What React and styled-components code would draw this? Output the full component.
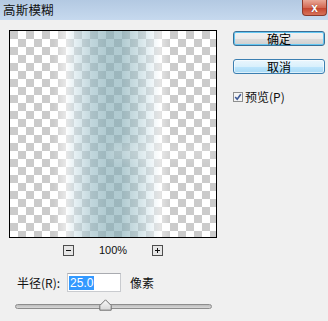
import React from "react";
import styled, { createGlobalStyle } from "styled-components";

const Global = createGlobalStyle`
  html, body { margin: 0; padding: 0; background: #f0f0f0; }
  body { font-family: "Noto Sans CJK SC", "Liberation Sans", sans-serif; }
`;

const Window = styled.div`
  width: 328px;
  height: 321px;
  background: #f0f0f0;
  display: flex;
  flex-direction: column;
  overflow: hidden;
`;

const TitleBar = styled.div`
  height: 20px;
  flex: none;
  display: flex;
  align-items: flex-start;
  justify-content: space-between;
  background: linear-gradient(#b3c9e2, #c6d9ee);
  padding-left: 3px;
`;

const Title = styled.div`
  font-size: 12.5px;
  line-height: 20px;
  color: #101010;
  letter-spacing: 0.2px;
`;

const CloseButton = styled.div`
  width: 25px;
  height: 16px;
  margin-right: 1px;
  box-sizing: border-box;
  border: 1px solid #8a3a2c;
  border-top: none;
  border-radius: 0 0 4px 4px;
  background: linear-gradient(#e9a897, #d46a55 50%, #c54630 55%, #d7735a);
  display: flex;
  align-items: center;
  justify-content: center;
  color: #fff;
  font-family: "Liberation Sans", sans-serif;
  font-weight: bold;
  font-size: 12px;
  line-height: 1;
  text-shadow: 0 0 1px #6a2418;
`;

const Body = styled.div`
  display: grid;
  grid-template-columns: 233px 1fr;
  padding-top: 10px;
`;

const LeftCol = styled.div`
  padding-left: 9px;
  display: flex;
  flex-direction: column;
`;

const Preview = styled.div`
  position: relative;
  width: 208px;
  height: 208px;
  box-sizing: border-box;
  border: 1px solid #000;
  background-color: #fff;
  background-image:
    linear-gradient(45deg, #cbcbcb 25%, transparent 25%, transparent 75%, #cbcbcb 75%),
    linear-gradient(45deg, #cbcbcb 25%, transparent 25%, transparent 75%, #cbcbcb 75%);
  background-size: 16px 16px;
  background-position: 8px 0, 0 8px;
  overflow: hidden;
`;

const Band = styled.div`
  position: absolute;
  inset: 0;
  background: linear-gradient(
    to right,
    rgba(255, 255, 255, 0) 21%,
    rgba(255, 255, 255, 0.55) 27%,
    rgba(205, 225, 232, 0.55) 32%,
    rgba(150, 186, 196, 0.6) 40%,
    rgba(128, 170, 180, 0.62) 47%,
    rgba(128, 170, 180, 0.62) 54%,
    rgba(160, 194, 202, 0.55) 61%,
    rgba(215, 232, 238, 0.55) 68%,
    rgba(255, 255, 255, 0.5) 73%,
    rgba(255, 255, 255, 0) 78%
  );
`;

const Ghost = styled.div`
  position: absolute;
  left: 100px;
  top: 112px;
  width: 104px;
  height: 18px;
  background: rgba(255, 255, 255, 0.18);
  filter: blur(5px);
`;

const ZoomRow = styled.div`
  margin-top: 7px;
  width: 208px;
  height: 10px;
  display: flex;
  align-items: center;
  justify-content: center;
  gap: 25px;
`;

const ZoomText = styled.span`
  font-family: "Liberation Sans", sans-serif;
  font-size: 11px;
  line-height: 10px;
  color: #111;
`;

const IconBox = styled.svg`
  display: block;
  width: 11px;
  height: 11px;
`;

const RadiusRow = styled.div`
  margin-top: 18px;
  padding-left: 8px;
  display: flex;
  align-items: center;
  height: 19px;
`;

const Label = styled.span`
  font-size: 12px;
  color: #111;
`;

const Input = styled.div`
  margin-left: 7px;
  width: 54px;
  height: 19px;
  box-sizing: border-box;
  border: 1px solid #c9cbcf;
  border-top-color: #a9abb0;
  background: #fff;
  display: flex;
  align-items: center;
  padding-left: 1px;
`;

const Selected = styled.span`
  background: #3399ff;
  color: #fff;
  font-family: "Liberation Sans", sans-serif;
  font-size: 12px;
  line-height: 14px;
  padding: 0 1px;
`;

const Unit = styled.span`
  margin-left: 9px;
  font-size: 12px;
  color: #111;
`;

const Track = styled.div`
  position: relative;
  margin-top: 12px;
  margin-left: 6px;
  width: 197px;
  height: 5px;
  box-sizing: border-box;
  border: 1px solid #8d8d8d;
  border-radius: 3px;
  background: linear-gradient(#bdbdbd, #d8d8d8);
`;

const Thumb = styled.svg`
  position: absolute;
  left: 83px;
  top: -6px;
  width: 13px;
  height: 12px;
`;

const RightCol = styled.div`
  padding-top: 1px;
  display: flex;
  flex-direction: column;
  align-items: flex-start;
`;

const Button = styled.div`
  width: 92px;
  height: 15px;
  box-sizing: border-box;
  margin-top: ${(p) => p.$gap || 0}px;
  border: 1px solid ${(p) => (p.$hover ? "#3c7fb1" : "#3b6f96")};
  border-radius: 3px;
  background: ${(p) =>
    p.$hover
      ? "linear-gradient(#eaf6fd 0%, #d9f0fc 50%, #bee6fd 51%, #a7d9f5 100%)"
      : "linear-gradient(#f2f2f2 0%, #ebebeb 50%, #dddddd 51%, #cfcfcf 100%)"};
  box-shadow: ${(p) => (p.$default ? "inset 0 0 0 1px #62c7f3" : "inset 0 0 0 1px rgba(255,255,255,0.6)")};
  display: flex;
  align-items: center;
  justify-content: center;
  font-size: 12px;
  line-height: 1;
  color: #000;
`;

const CheckRow = styled.div`
  margin-top: 14px;
  display: flex;
  align-items: center;
  gap: 2px;
  font-size: 12px;
  color: #111;
`;

const CheckIcon = styled.svg`
  display: block;
  width: 10px;
  height: 10px;
`;

function ZoomIcon({ plus }) {
  return (
    <IconBox viewBox="0 0 11 11">
      <rect x="0.5" y="0.5" width="10" height="10" fill="#e6e6e6" stroke="#4d4d4d" />
      <line x1="3" y1="5.5" x2="8" y2="5.5" stroke="#111" strokeWidth="1" />
      {plus && <line x1="5.5" y1="3" x2="5.5" y2="8" stroke="#111" strokeWidth="1" />}
    </IconBox>
  );
}

export default function App() {
  return (
    <>
      <Global />
      <Window>
        <TitleBar>
          <Title>高斯模糊</Title>
          <CloseButton>x</CloseButton>
        </TitleBar>
        <Body>
          <LeftCol>
            <Preview>
              <Band />
              <Ghost />
            </Preview>
            <ZoomRow>
              <ZoomIcon />
              <ZoomText>100%</ZoomText>
              <ZoomIcon plus />
            </ZoomRow>
            <RadiusRow>
              <Label>半径(R):</Label>
              <Input>
                <Selected>25.0</Selected>
              </Input>
              <Unit>像素</Unit>
            </RadiusRow>
            <Track>
              <Thumb viewBox="0 0 13 12">
                <defs>
                  <linearGradient id="tg" x1="0" y1="0" x2="0" y2="1">
                    <stop offset="0" stopColor="#fafafa" />
                    <stop offset="1" stopColor="#d6d6d6" />
                  </linearGradient>
                </defs>
                <path d="M6.5 0.8 L12.2 6.5 L12.2 11.2 L0.8 11.2 L0.8 6.5 Z" fill="url(#tg)" stroke="#6f6f6f" strokeWidth="1" />
              </Thumb>
            </Track>
          </LeftCol>
          <RightCol>
            <Button $default>确定</Button>
            <Button $hover $gap={13}>取消</Button>
            <CheckRow>
              <CheckIcon viewBox="0 0 10 10">
                <rect x="0.5" y="0.5" width="9" height="9" fill="#f4f4f4" stroke="#8e8f8f" />
                <path d="M2.2 5 L4.2 7.3 L7.8 2.3" fill="none" stroke="#3d5a98" strokeWidth="1.6" />
              </CheckIcon>
              <span>预览(P)</span>
            </CheckRow>
          </RightCol>
        </Body>
      </Window>
    </>
  );
}
